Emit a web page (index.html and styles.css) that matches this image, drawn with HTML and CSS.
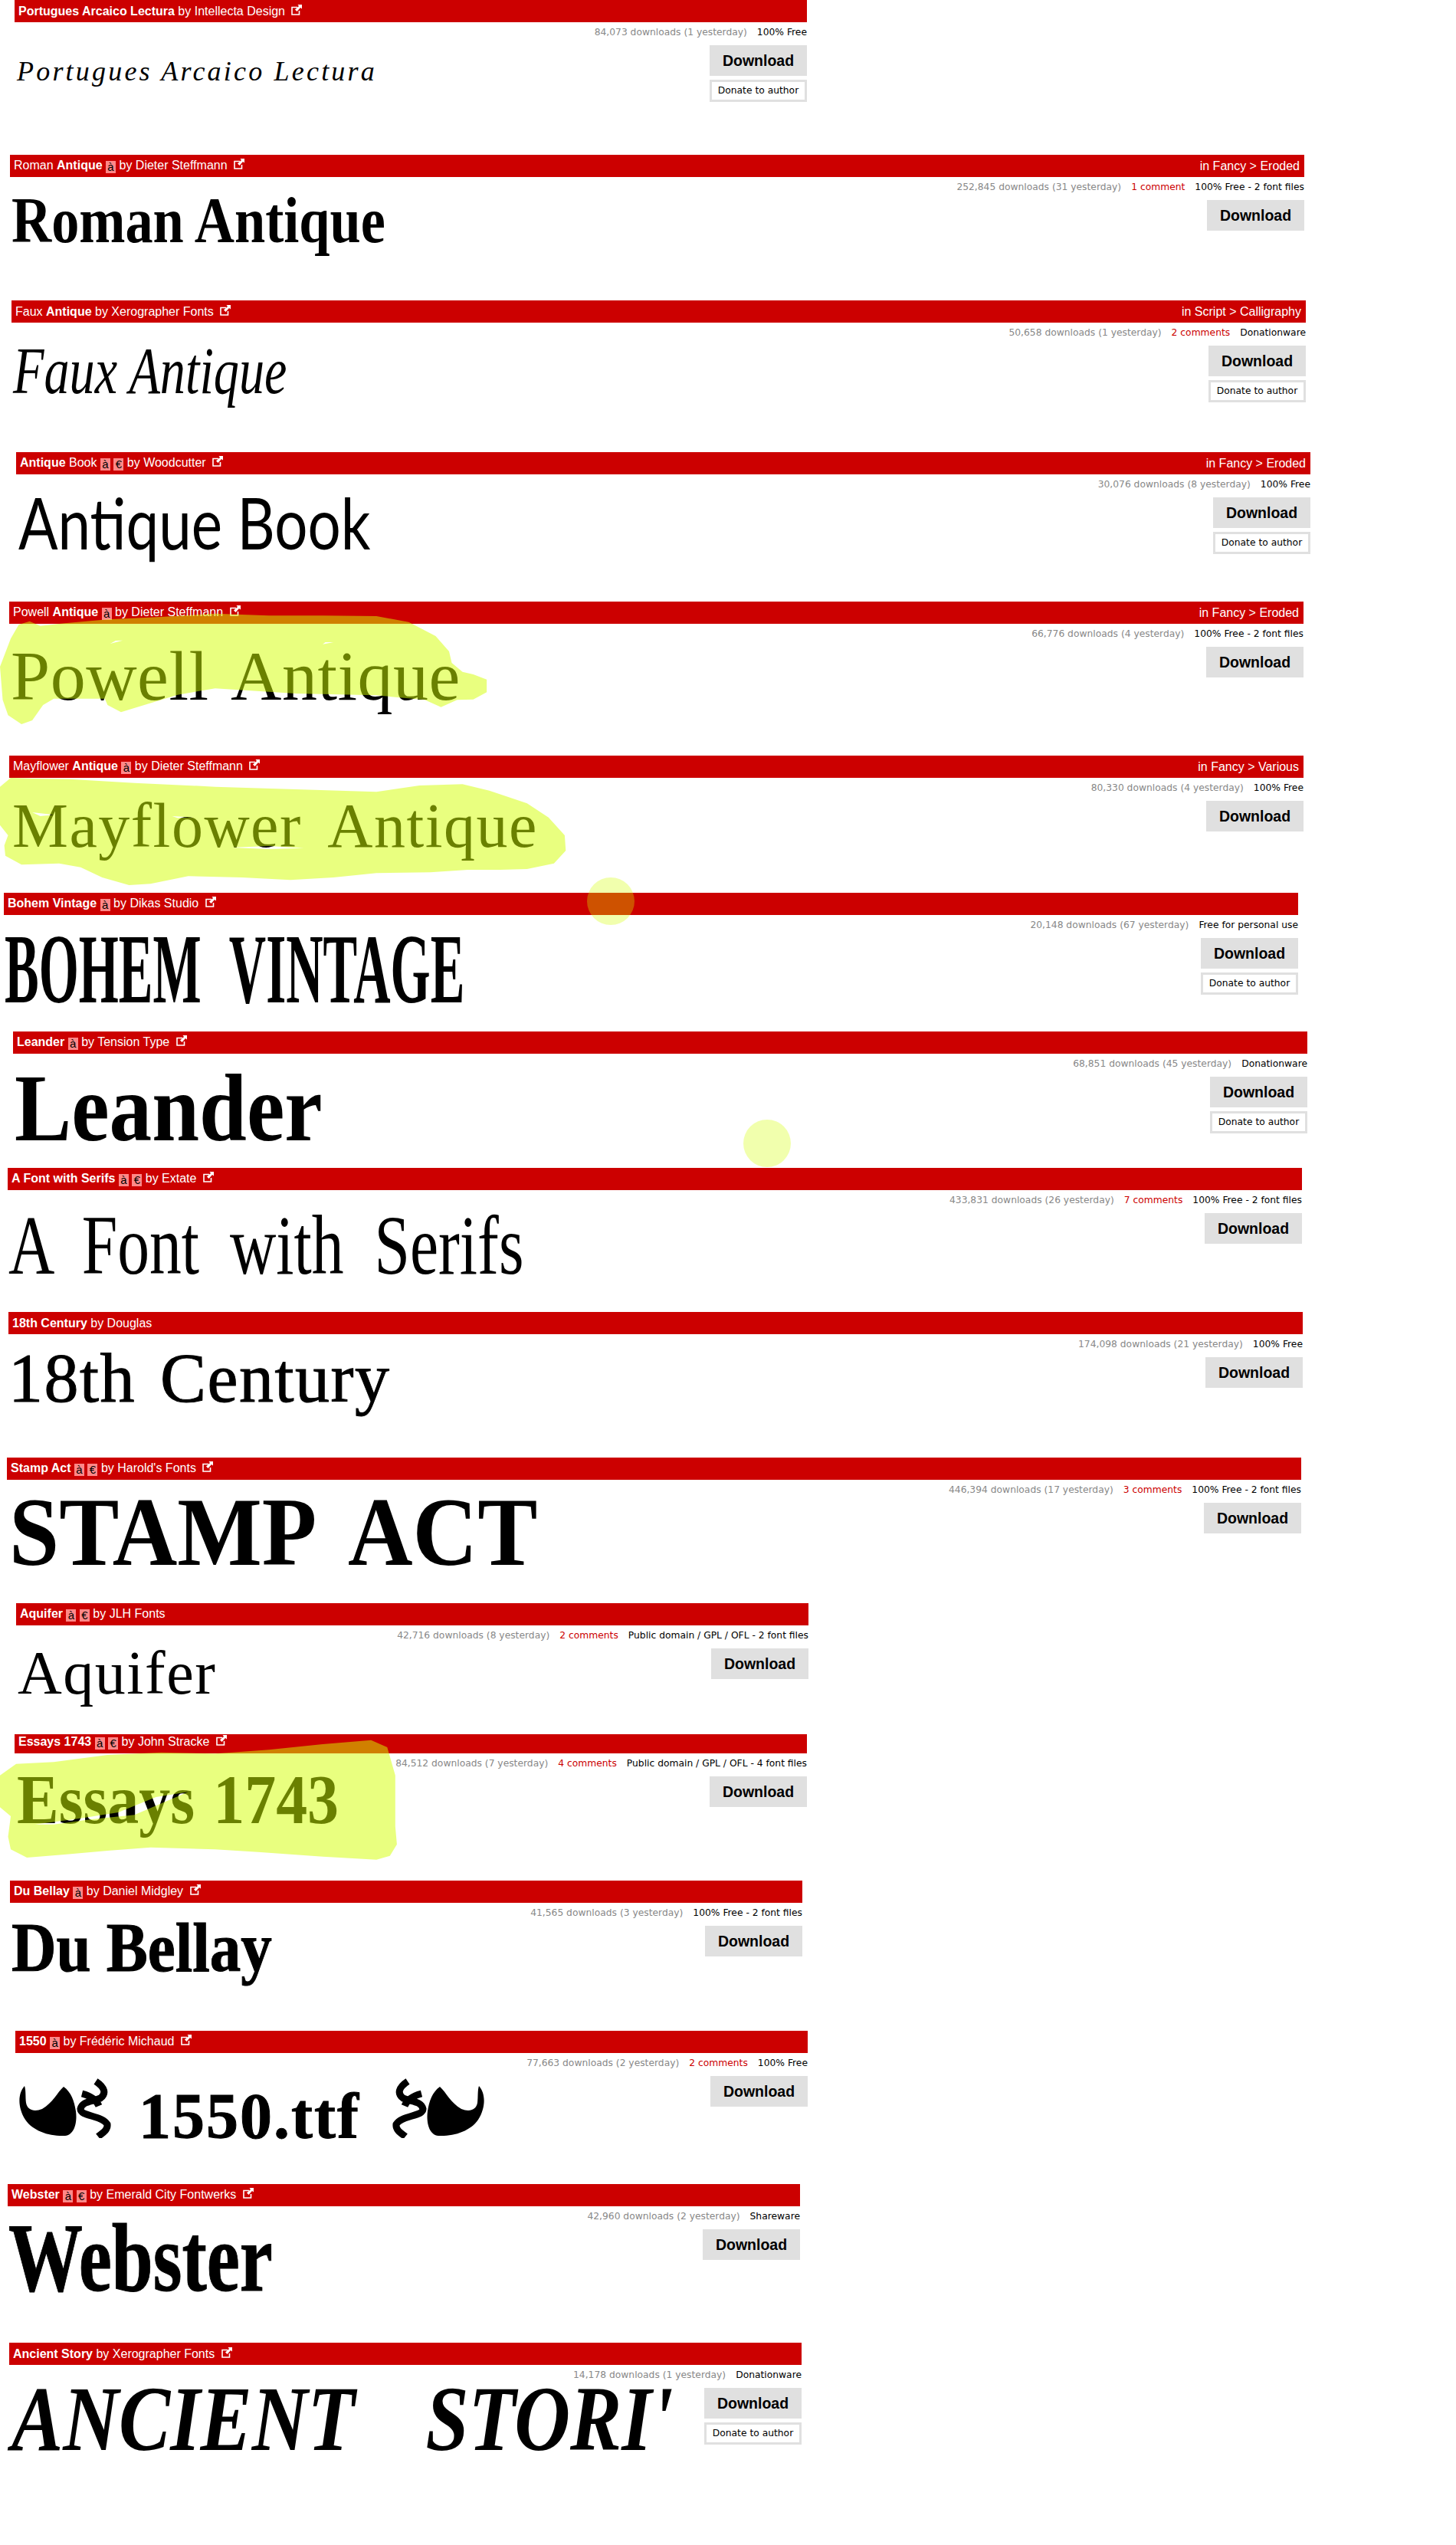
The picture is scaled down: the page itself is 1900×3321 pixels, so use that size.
FILE: index.html
```html
<!DOCTYPE html>
<html lang="en">
<head>
  <meta charset="UTF-8">
  <title>Antique fonts</title>
  <link rel="stylesheet" href="styles.css">
</head>
<body>
  <svg width="0" height="0" class="defs">
    <symbol id="ext" viewBox="0 0 14 14">
      <path d="M8 3.5H1V13H10.5V8" fill="none" stroke="#fff" stroke-width="1.6"/>
      <path d="M8.5 0H14V5.5L12 4L7.5 9L5 6.5L10 2Z" fill="#fff"/>
    </symbol>
    <symbol id="orn" viewBox="0 0 122 80">
      <path d="M7 12C-2 22-2 40 8 56C18 71 40 78 60 77C72 76 76 60 74 45C72 32 68 20 58 13C50 20 44 34 30 42C20 46 11 44 9 34C8 26 9 18 7 12Z" fill="#000"/>
      <path d="M100 6C112 14 114 22 106 28C94 33 82 32 80 42C80 52 108 50 115 62C116 70 108 74 103 78M82 22C90 24 100 28 104 38" fill="none" stroke="#000" stroke-width="9"/>
    </symbol>
  </svg>

  <div class="font-item it1">
    <div class="bar"><div><b>Portugues Arcaico Lectura</b> by Intellecta Design <svg class="ext"><use href="#ext"/></svg></div></div>
    <div class="font-body">
      <div class="specimen sp1">Portugues Arcaico Lectura</div>
      <div class="meta">
        <div class="stats"><span class="dl">84,073 downloads (1 yesterday)</span><span>100% Free</span></div>
        <a class="btn-dl">Download</a>
        <a class="btn-donate">Donate to author</a>
      </div>
    </div>
  </div>

  <div class="font-item it2">
    <div class="bar"><div>Roman <b>Antique</b> <span class="badge">à</span> by Dieter Steffmann <svg class="ext"><use href="#ext"/></svg></div><div>in Fancy &gt; Eroded</div></div>
    <div class="font-body">
      <div class="specimen sp2">Roman Antique</div>
      <div class="meta">
        <div class="stats"><span class="dl">252,845 downloads (31 yesterday)</span><span class="cm">1 comment</span><span>100% Free - 2 font files</span></div>
        <a class="btn-dl">Download</a>
      </div>
    </div>
  </div>

  <div class="font-item it3">
    <div class="bar"><div>Faux <b>Antique</b> by Xerographer Fonts <svg class="ext"><use href="#ext"/></svg></div><div>in Script &gt; Calligraphy</div></div>
    <div class="font-body">
      <div class="specimen sp3">Faux Antique</div>
      <div class="meta">
        <div class="stats"><span class="dl">50,658 downloads (1 yesterday)</span><span class="cm">2 comments</span><span>Donationware</span></div>
        <a class="btn-dl">Download</a>
        <a class="btn-donate">Donate to author</a>
      </div>
    </div>
  </div>

  <div class="font-item it4">
    <div class="bar"><div><b>Antique</b> Book <span class="badge">à</span> <span class="badge">€</span> by Woodcutter <svg class="ext"><use href="#ext"/></svg></div><div>in Fancy &gt; Eroded</div></div>
    <div class="font-body">
      <div class="specimen sp4">Antique Book</div>
      <div class="meta">
        <div class="stats"><span class="dl">30,076 downloads (8 yesterday)</span><span>100% Free</span></div>
        <a class="btn-dl">Download</a>
        <a class="btn-donate">Donate to author</a>
      </div>
    </div>
  </div>

  <div class="font-item it5">
    <div class="bar"><div>Powell <b>Antique</b> <span class="badge">à</span> by Dieter Steffmann <svg class="ext"><use href="#ext"/></svg></div><div>in Fancy &gt; Eroded</div></div>
    <div class="font-body">
      <div class="specimen sp5">Powell Antique</div>
      <div class="meta">
        <div class="stats"><span class="dl">66,776 downloads (4 yesterday)</span><span>100% Free - 2 font files</span></div>
        <a class="btn-dl">Download</a>
      </div>
    </div>
  </div>

  <div class="font-item it6">
    <div class="bar"><div>Mayflower <b>Antique</b> <span class="badge">à</span> by Dieter Steffmann <svg class="ext"><use href="#ext"/></svg></div><div>in Fancy &gt; Various</div></div>
    <div class="font-body">
      <div class="specimen sp6">Mayflower Antique</div>
      <div class="meta">
        <div class="stats"><span class="dl">80,330 downloads (4 yesterday)</span><span>100% Free</span></div>
        <a class="btn-dl">Download</a>
      </div>
    </div>
  </div>

  <div class="font-item it7">
    <div class="bar"><div><b>Bohem Vintage</b> <span class="badge">à</span> by Dikas Studio <svg class="ext"><use href="#ext"/></svg></div></div>
    <div class="font-body">
      <div class="specimen sp7">BOHEM VINTAGE</div>
      <div class="meta">
        <div class="stats"><span class="dl">20,148 downloads (67 yesterday)</span><span>Free for personal use</span></div>
        <a class="btn-dl">Download</a>
        <a class="btn-donate">Donate to author</a>
      </div>
    </div>
  </div>

  <div class="font-item it8">
    <div class="bar"><div><b>Leander</b> <span class="badge">à</span> by Tension Type <svg class="ext"><use href="#ext"/></svg></div></div>
    <div class="font-body">
      <div class="specimen sp8">Leander</div>
      <div class="meta">
        <div class="stats"><span class="dl">68,851 downloads (45 yesterday)</span><span>Donationware</span></div>
        <a class="btn-dl">Download</a>
        <a class="btn-donate">Donate to author</a>
      </div>
    </div>
  </div>

  <div class="font-item it9">
    <div class="bar"><div><b>A Font with Serifs</b> <span class="badge">à</span> <span class="badge">€</span> by Extate <svg class="ext"><use href="#ext"/></svg></div></div>
    <div class="font-body">
      <div class="specimen sp9">A Font with Serifs</div>
      <div class="meta">
        <div class="stats"><span class="dl">433,831 downloads (26 yesterday)</span><span class="cm">7 comments</span><span>100% Free - 2 font files</span></div>
        <a class="btn-dl">Download</a>
      </div>
    </div>
  </div>

  <div class="font-item it10">
    <div class="bar"><div><b>18th Century</b> by Douglas</div></div>
    <div class="font-body">
      <div class="specimen sp10">18th Century</div>
      <div class="meta">
        <div class="stats"><span class="dl">174,098 downloads (21 yesterday)</span><span>100% Free</span></div>
        <a class="btn-dl">Download</a>
      </div>
    </div>
  </div>

  <div class="font-item it11">
    <div class="bar"><div><b>Stamp Act</b> <span class="badge">à</span> <span class="badge">€</span> by Harold's Fonts <svg class="ext"><use href="#ext"/></svg></div></div>
    <div class="font-body">
      <div class="specimen sp11">STAMP ACT</div>
      <div class="meta">
        <div class="stats"><span class="dl">446,394 downloads (17 yesterday)</span><span class="cm">3 comments</span><span>100% Free - 2 font files</span></div>
        <a class="btn-dl">Download</a>
      </div>
    </div>
  </div>

  <div class="font-item it12">
    <div class="bar"><div><b>Aquifer</b> <span class="badge">à</span> <span class="badge">€</span> by JLH Fonts</div></div>
    <div class="font-body">
      <div class="specimen sp12">Aquifer</div>
      <div class="meta">
        <div class="stats"><span class="dl">42,716 downloads (8 yesterday)</span><span class="cm">2 comments</span><span>Public domain / GPL / OFL - 2 font files</span></div>
        <a class="btn-dl">Download</a>
      </div>
    </div>
  </div>

  <div class="font-item it13">
    <div class="bar bar-short"><div><b>Essays 1743</b> <span class="badge">à</span> <span class="badge">€</span> by John Stracke <svg class="ext"><use href="#ext"/></svg></div></div>
    <div class="font-body">
      <div class="specimen sp13">Essays 1743</div>
      <div class="meta">
        <div class="stats"><span class="dl">84,512 downloads (7 yesterday)</span><span class="cm">4 comments</span><span>Public domain / GPL / OFL - 4 font files</span></div>
        <a class="btn-dl">Download</a>
      </div>
    </div>
  </div>

  <div class="font-item it14">
    <div class="bar"><div><b>Du Bellay</b> <span class="badge">à</span> by Daniel Midgley <svg class="ext"><use href="#ext"/></svg></div></div>
    <div class="font-body">
      <div class="specimen sp14">Du Bellay</div>
      <div class="meta">
        <div class="stats"><span class="dl">41,565 downloads (3 yesterday)</span><span>100% Free - 2 font files</span></div>
        <a class="btn-dl">Download</a>
      </div>
    </div>
  </div>

  <div class="font-item it15">
    <div class="bar"><div><b>1550</b> <span class="badge">à</span> by Frédéric Michaud <svg class="ext"><use href="#ext"/></svg></div></div>
    <div class="font-body">
      <div class="specimen sp15">
        <svg class="orn"><use href="#orn"/></svg>
        <span class="sp15-text">1550.ttf</span>
        <svg class="orn orn-flip"><use href="#orn"/></svg>
      </div>
      <div class="meta">
        <div class="stats"><span class="dl">77,663 downloads (2 yesterday)</span><span class="cm">2 comments</span><span>100% Free</span></div>
        <a class="btn-dl">Download</a>
      </div>
    </div>
  </div>

  <div class="font-item it16">
    <div class="bar"><div><b>Webster</b> <span class="badge">à</span> <span class="badge">€</span> by Emerald City Fontwerks <svg class="ext"><use href="#ext"/></svg></div></div>
    <div class="font-body">
      <div class="specimen sp16">Webster</div>
      <div class="meta">
        <div class="stats"><span class="dl">42,960 downloads (2 yesterday)</span><span>Shareware</span></div>
        <a class="btn-dl">Download</a>
      </div>
    </div>
  </div>

  <div class="font-item it17">
    <div class="bar"><div><b>Ancient Story</b> by Xerographer Fonts <svg class="ext"><use href="#ext"/></svg></div></div>
    <div class="font-body">
      <div class="specimen sp17">ANCIENT STORI'</div>
      <div class="meta">
        <div class="stats"><span class="dl">14,178 downloads (1 yesterday)</span><span>Donationware</span></div>
        <a class="btn-dl">Download</a>
        <a class="btn-donate">Donate to author</a>
      </div>
    </div>
  </div>

  <!-- marker strokes somebody drew over the page -->
  <svg class="marks" viewBox="0 0 1900 3321">
    <path transform="translate(0 770) scale(.7018 .3333)" fill-rule="evenodd" d="M20 190L35 135L55 122L75 140L120 130L200 115L300 105L400 92L500 100L600 100L700 102L760 125L810 180L835 240L840 285L860 320L880 330L905 350L905 400L880 428L850 430L820 458L790 430L700 412L550 405L400 385L330 410L260 455L225 478L200 450L195 425L100 425L80 450L60 510L40 525L15 490L5 430L0 300Z M205 210L228 197L215 198Z M600 212L620 204L605 204Z"/>
    <path transform="translate(0 770) scale(.7018 .3333)" fill-rule="evenodd" d="M20 735L60 738L130 740L250 755L400 770L550 780L700 790L780 765L860 760L910 785L980 835L1020 890L1050 960L1052 1020L1030 1070L980 1092L930 1095L870 1095L800 1105L700 1108L620 1125L540 1135L450 1125L350 1120L280 1150L240 1155L190 1125L150 1085L110 1070L40 1075L10 1040L8 1000L15 960L0 920L0 770Z M60 870L100 880L75 885Z M320 885L360 890L330 892Z M430 1008L500 1002L565 1010L500 1014Z"/>
    <path transform="translate(0 2250) scale(.7018 .3333)" fill-rule="evenodd" d="M0 200L30 155L100 148L200 120L300 110L400 115L500 100L600 78L690 62L720 90L735 200L735 400L738 470L725 515L700 530L600 518L480 500L400 490L280 482L200 495L120 510L50 522L20 490L15 440L20 360L0 325Z M350 265L290 285L220 345L150 368L65 392L100 392L170 372L250 355L300 310Z"/>
    <circle class="dot" cx="797" cy="1176" r="31"/>
    <circle class="dot" cx="1001" cy="1492" r="31"/>
  </svg>
</body>
</html>
```

FILE: styles.css
```css
body {
  margin: 0;
  position: relative;
  background: #fff;
  color: #000;
  font-family: "Liberation Sans", Arial, sans-serif;
}

.defs {
  position: absolute;
}

.font-item {
  box-sizing: border-box;
  width: 1689px;
}

.bar {
  display: flex;
  justify-content: space-between;
  align-items: center;
  height: 29px;
  padding: 0 6px 0 5px;
  background: #c00;
  color: #fff;
  font-size: 16px;
  white-space: nowrap;
}

.bar-short {
  height: 25px;
  align-items: flex-start;
  padding-top: 1px;
  box-sizing: border-box;
}

.badge {
  display: inline-block;
  width: 13px;
  height: 16px;
  line-height: 16px;
  background: #f88;
  color: #000;
  text-align: center;
  vertical-align: -2px;
  font-size: 15px;
}

.ext {
  width: 14px;
  height: 14px;
  margin-left: 4px;
  vertical-align: 0;
}

.font-body {
  display: flex;
  justify-content: space-between;
  align-items: flex-start;
}

.meta {
  display: flex;
  flex: none;
  flex-direction: column;
  align-items: flex-end;
}

.stats {
  display: flex;
  gap: 13px;
  height: 29.5px;
  padding-top: 5px;
  box-sizing: border-box;
  line-height: 17px;
  font-family: "DejaVu Sans", Tahoma, sans-serif;
  font-size: 12.3px;
  white-space: nowrap;
}

.dl {
  color: #888;
}

.cm {
  color: #c00;
}

.btn-dl {
  display: block;
  box-sizing: border-box;
  width: 127px;
  height: 40.5px;
  line-height: 40px;
  background: #e0e0e0;
  text-align: center;
  font-size: 19.5px;
  font-weight: bold;
}

.btn-donate {
  display: block;
  box-sizing: border-box;
  width: 127px;
  height: 29px;
  margin-top: 5px;
  border: 3px solid #e0e0e0;
  line-height: 23px;
  text-align: center;
  font-family: "DejaVu Sans", Tahoma, sans-serif;
  font-size: 12.3px;
}

/* place of each row on the sheet */
.it1 { width: 1034px; margin-left: 19px; height: 202px; }
.it2 { margin-left: 13px; height: 190px; }
.it3 { margin-left: 15px; height: 198px; }
.it4 { margin-left: 21px; height: 195px; }
.it5 { margin-left: 12px; height: 201px; }
.it6 { margin-left: 12px; height: 179px; }
.it7 { margin-left: 5px; height: 181px; }
.it8 { margin-left: 17px; height: 178px; }
.it9 { margin-left: 10px; height: 188px; }
.it10 { margin-left: 11px; height: 190px; }
.it11 { margin-left: 9px; height: 190px; }
.it12 { width: 1034px; margin-left: 21px; height: 171px; }
.it13 { width: 1034px; margin-left: 19px; height: 191px; }
.it14 { width: 1034px; margin-left: 13px; height: 196px; }
.it15 { width: 1034px; margin-left: 20px; height: 200px; }
.it16 { width: 1034px; margin-left: 10px; height: 207px; }
.it17 { width: 1034px; margin-left: 12px; height: 264px; }

/* font previews, the sizes are fitted by eye */
.specimen {
  flex: 1;
  min-width: 0;
  line-height: 100px;
  height: 100px;
  white-space: nowrap;
  transform-origin: left center;
  font-family: "Liberation Serif", "Times New Roman", serif;
}

.sp1 { margin: 14px 0 0 3px; font-size: 36px; font-style: italic; letter-spacing: 3.2px; }
.sp2 { margin: 7px 0 0 2px; font-size: 84px; font-weight: bold; transform: scaleX(.86); }
.sp3 { margin: 13px 0 0 2px; font-size: 86px; font-style: italic; transform: scaleX(.77); }
.sp4 { margin: 12px 0 0 3px; font-family: Lato, sans-serif; font-size: 93px; transform: scaleX(.82); }
.sp5 { margin: 18px 0 0 2px; font-size: 92px; letter-spacing: .5px; word-spacing: 10px; }
.sp6 { margin: 13px 0 0 4px; font-size: 82px; letter-spacing: 1.5px; word-spacing: 16px; }
.sp7 { margin: 20px 0 0 1px; font-size: 130px; font-weight: bold; word-spacing: 40px; transform: scaleX(.515); }
.sp8 { margin: 21px 0 0 2px; font-size: 125px; font-weight: bold; transform: scaleX(.89); }
.sp9 { margin: 22px 0 0 1px; font-size: 110px; word-spacing: 25px; transform: scaleX(.76); }
.sp10 { margin: 8px 0 0 0; font-size: 90px; letter-spacing: 1.5px; word-spacing: 8px; -webkit-text-stroke: 1px #000; }
.sp11 { margin: 19px 0 0 3px; font-size: 126px; font-weight: bold; word-spacing: 26px; transform: scaleX(.93); }
.sp12 { margin: 12px 0 0 2px; font-size: 80px; letter-spacing: 1.5px; }
.sp13 { margin: 11px 0 0 3px; font-size: 90px; font-weight: bold; word-spacing: 4px; transform: scaleX(.91); }
.sp14 { margin: 9px 0 0 2px; font-size: 90px; font-weight: bold; transform: scaleX(.9); -webkit-text-stroke: 1px #000; }
.sp15 { margin: 31px 0 0 5px; font-size: 84px; font-weight: bold; display: flex; align-items: baseline; }
.sp15-text { margin: 0 40px 0 34px; letter-spacing: 2px; -webkit-text-stroke: 1px #000; }
.sp16 { margin: 18px 0 0 1px; font-size: 126px; font-weight: bold; transform: scaleX(.77); -webkit-text-stroke: 1px #000; }
.sp17 { margin: 21px 0 0 3px; font-size: 120px; font-weight: bold; font-style: italic; word-spacing: 80px; transform: scaleX(.84); }

.orn {
  flex: none;
  width: 122px;
  height: 80px;
}

.orn-flip {
  transform: scaleX(-1);
}

.marks {
  position: absolute;
  left: 0;
  top: 0;
  width: 1900px;
  height: 3321px;
  pointer-events: none;
  fill: rgba(212, 255, 0, .5);
}

.marks .dot {
  fill: rgba(212, 255, 0, .32);
}
```
